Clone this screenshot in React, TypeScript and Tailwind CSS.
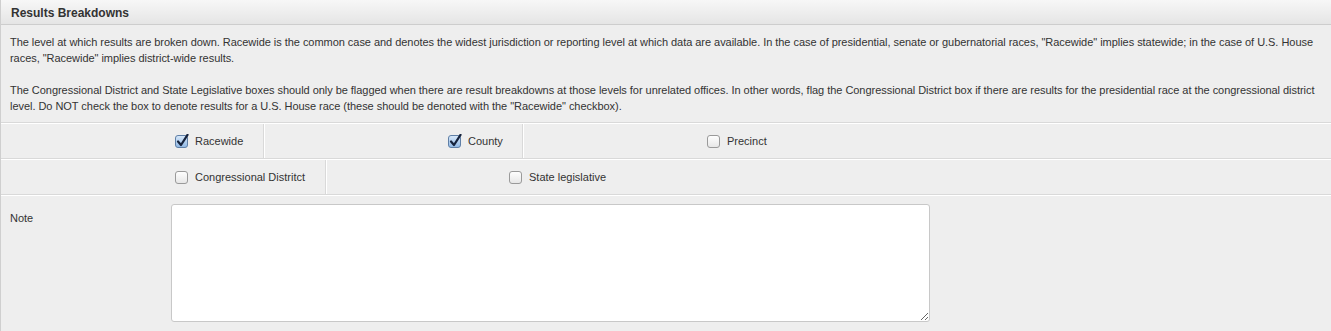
import React from 'react'

const font = { fontFamily: '"Liberation Sans", Arial, sans-serif' }

const Box = ({ checked }: { checked: boolean }) => (
  <svg width="14" height="14" viewBox="0 0 14 14" className="shrink-0">
    <defs>
      <linearGradient id="cbOn" x1="0" y1="0" x2="0" y2="1">
        <stop offset="0" stopColor="#d9e9fa" />
        <stop offset="1" stopColor="#8fb7e4" />
      </linearGradient>
      <linearGradient id="cbOff" x1="0" y1="0" x2="0" y2="1">
        <stop offset="0" stopColor="#ffffff" />
        <stop offset="1" stopColor="#e6e6e6" />
      </linearGradient>
    </defs>
    <rect
      x="0.5"
      y="1.5"
      width="12"
      height="12"
      rx="2.5"
      fill={checked ? 'url(#cbOn)' : 'url(#cbOff)'}
      stroke={checked ? '#5f7fa6' : '#9a9a9a'}
    />
    {checked && (
      <path d="M3 7.5 L6 11 L12.5 0.8" fill="none" stroke="#16233d" strokeWidth="2.2" strokeLinecap="round" strokeLinejoin="round" />
    )}
  </svg>
)

const Check = ({ label, checked = false }: { label: string; checked?: boolean }) => (
  <label className="flex items-center gap-[6px] text-[11px] text-[#333]">
    <Box checked={checked} />
    <span>{label}</span>
  </label>
)

export default function App() {
  return (
    <div className="w-[1331px] h-[331px] overflow-hidden bg-[#eeeeee] border-l border-[#cfcfcf]" style={font}>
      {/* header */}
      <div className="h-[25px] flex items-center px-[10px] pt-[1px] bg-gradient-to-b from-[#f7f7f7] to-[#e5e5e5] border-b border-[#cdcdcd]">
        <h2 className="text-[12px] font-bold text-[#333]">Results Breakdowns</h2>
      </div>

      {/* description */}
      <div className="pt-[9px] pb-[8px] pl-[9px] pr-0 text-[11px] leading-[16px] tracking-[-0.04px] text-[#333] border-b border-[#d9d9d9]">
        <p>
          The level at which results are broken down. Racewide is the common case and denotes the widest jurisdiction or reporting level at which data are available. In the case of presidential, senate or gubernatorial races, "Racewide" implies statewide; in the case of U.S. House races, "Racewide" implies district-wide results.
        </p>
        <p className="mt-[16px]">
          The Congressional District and State Legislative boxes should only be flagged when there are result breakdowns at those levels for unrelated offices. In other words, flag the Congressional District box if there are results for the presidential race at the congressional district level. Do NOT check the box to denote results for a U.S. House race (these should be denoted with the "Racewide" checkbox).
        </p>
      </div>

      {/* row 1 */}
      <div className="flex h-[36px] border-t border-white border-b border-b-[#d9d9d9]">
        <div className="w-[263px] flex items-center pl-[174px] border-r border-[#d9d9d9]">
          <Check label="Racewide" checked />
        </div>
        <div className="w-[259px] flex items-center pl-[183px] border-l border-white border-r border-r-[#d9d9d9]">
          <Check label="County" checked />
        </div>
        <div className="flex-1 flex items-center pl-[183px] border-l border-white">
          <Check label="Precinct" />
        </div>
      </div>

      {/* row 2 */}
      <div className="flex h-[36px] border-t border-white border-b border-b-[#d9d9d9]">
        <div className="w-[325px] flex items-center pl-[174px] border-r border-[#d9d9d9]">
          <Check label="Congressional Distritct" />
        </div>
        <div className="flex-1 flex items-center pl-[182px] border-l border-white">
          <Check label="State legislative" />
        </div>
      </div>

      {/* note */}
      <div className="flex border-t border-white pt-[8px]">
        <div className="w-[170px] pl-[9px] pt-[6px] text-[11px] text-[#333]">Note</div>
        <textarea className="w-[759px] h-[118px] bg-white border border-[#c8c8c8] rounded-[3px] outline-none" />
      </div>
    </div>
  )
}
